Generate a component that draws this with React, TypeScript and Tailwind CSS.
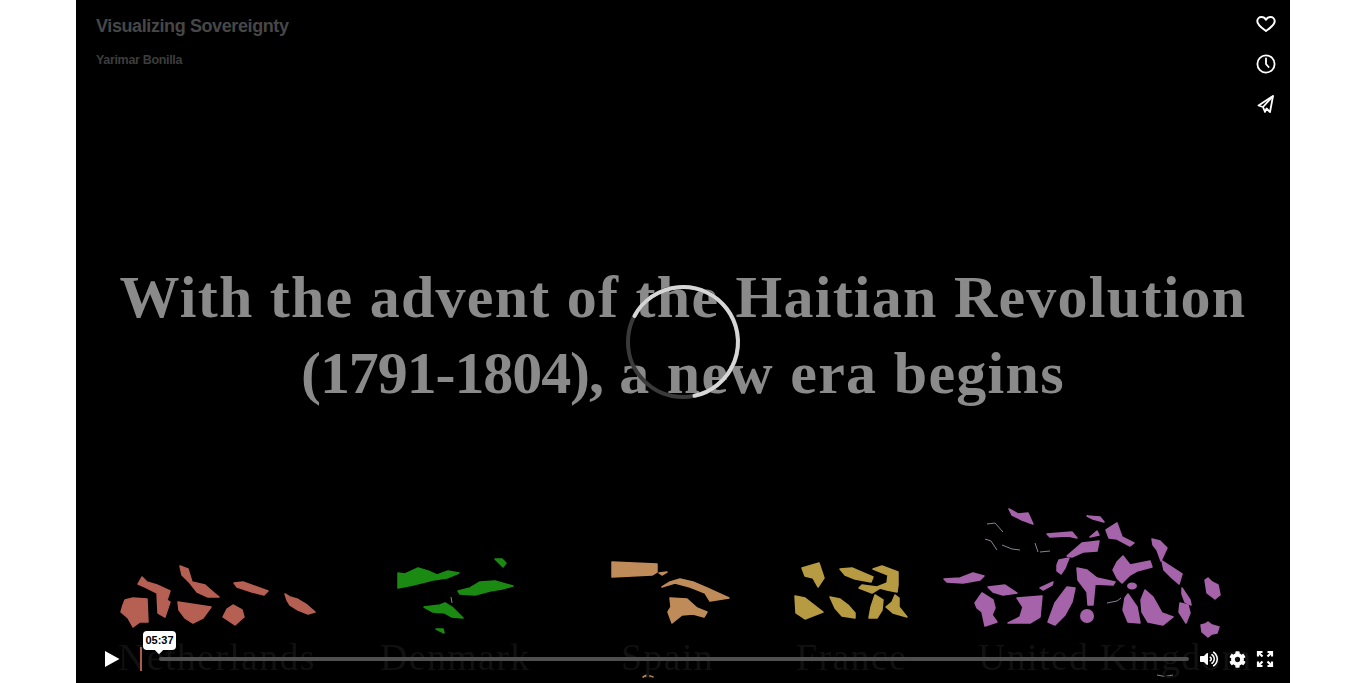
import { FaCog, FaVolumeUp } from "react-icons/fa";

const NL = [
  "125,600 133,598 147,599 148,622 140,622 133,627 128,618 121,612 123,605",
  "142,577 147,582 157,585 170,591 167,600 170,602 165,617 158,613 157,593 145,587 138,584",
  "180,566 188,569 192,582 205,585 213,592 219,597 208,597 197,592 190,583 182,575",
  "234,583 243,582 268,591 264,595 252,592 237,587",
  "178,602 211,607 203,618 193,623 185,618 179,610",
  "233,605 242,610 244,617 235,625 223,617 227,609",
  "285,594 290,597 297,599 307,605 315,612 308,614 298,610 290,605 287,600",
];
const DK = [
  "398,573 405,574 418,568 428,571 437,575 448,571 459,573 447,578 433,580 413,585 398,588",
  "495,559 502,559 506,563 503,567",
  "458,591 470,588 480,582 495,581 513,586 502,589 490,591 475,595 460,594",
  "424,607 440,605 445,603 453,608 463,618 452,617 445,613 433,612",
  "436,629 443,629 444,633",
];
const ES = [
  "612,562 657,564 657,572 652,575 612,577",
  "659,573 667,572 662,575",
  "662,587 670,582 680,579 693,582 707,588 729,598 710,601 705,593 690,587 675,583 665,586",
  "670,598 687,599 697,608 707,612 704,617 693,614 682,615 672,623 668,612 671,607",
  "643,677 647,675 653,677",
];
const FR = [
  "802,568 819,563 824,578 818,587 813,578 805,576",
  "840,569 852,568 873,577 871,582 855,579 845,575",
  "795,596 805,598 823,612 805,619 796,613",
  "830,597 840,599 848,605 855,613 855,618 842,616 835,608",
  "873,569 882,566 898,572 898,585 897,592 887,590 880,588 872,593 859,588 862,585 877,587 887,583 888,575",
  "875,595 883,600 882,610 877,618 869,618 871,607",
  "895,595 899,598 899,607 907,617 893,613 886,607 892,602",
];
const UK = [
  "1009,509 1018,514 1028,513 1033,524 1022,520 1012,515",
  "1087,516 1100,517 1104,522 1093,519",
  "1106,530 1117,523 1122,537 1134,543 1130,546 1117,539 1109,538",
  "1047,534 1072,532 1077,538 1068,536 1050,537",
  "1067,556 1082,543 1099,541 1097,551 1083,552 1072,557",
  "1090,537 1097,531 1099,535",
  "1152,539 1160,541 1167,548 1161,561 1157,550 1153,545",
  "1059,560 1069,558 1065,568 1061,574 1057,571 1057,565",
  "1113,570 1117,562 1123,556 1130,565 1150,561 1152,567 1137,571 1130,575 1122,583 1117,578",
  "1162,561 1182,574 1179,584 1172,578 1164,570",
  "944,579 960,578 973,573 984,576 980,580 963,583 947,582",
  "988,587 1005,585 1017,593 1003,595 993,592",
  "975,603 982,593 993,600 995,608 992,615 997,622 985,626 982,612 977,608",
  "1017,598 1042,596 1040,617 1030,623 1008,623 1020,617 1023,607",
  "1040,588 1053,582 1052,585 1043,590",
  "1067,587 1075,588 1072,602 1065,615 1055,625 1048,622 1055,603",
  "1077,568 1087,570 1097,578 1115,582 1113,585 1095,584 1093,605 1088,605 1087,592 1078,580",
  "1128,594 1137,607 1140,623 1128,622 1123,610 1125,598",
  "1145,590 1153,597 1162,613 1173,617 1163,625 1148,622 1142,612 1141,600",
  "1182,588 1190,600 1191,605 1185,602 1182,594",
  "1180,603 1188,605 1190,613 1186,623 1179,612",
  "1205,580 1208,578 1212,582 1218,585 1220,595 1215,599 1207,593",
  "1201,625 1205,624 1208,622 1212,625 1219,627 1217,633 1212,634 1208,637 1202,632",
];
const SLIVERS = [
  "M985 539l6 2 6 9",
  "M1002 545l10 4 8 1",
  "M1035 543l3 9",
  "M1040 552l10-1",
  "M987 524l8-1 8 9",
  "M1107 603l10-2 4-3",
  "M1157 675q8 3 16 0",
  "M451 597l1 6",
];
const LABELS: [string, string][] = [
  ["Netherlands", "w-[196px] ml-[42px]"],
  ["Denmark", "w-[150px] ml-[66px]"],
  ["Spain", "w-[90px] ml-[91px]"],
  ["France", "w-[108px] ml-[85px]"],
  ["United Kingdom", "w-[270px] ml-[74px]"],
];

function Islands({ shapes, fill }: { shapes: string[]; fill: string }) {
  return (
    <g fill={fill} stroke={fill} strokeWidth="1.500" strokeLinejoin="round">
      {shapes.map((p) => (
        <polygon key={p} points={p} />
      ))}
    </g>
  );
}

export default function App() {
  return (
    <div className="min-h-[683px] bg-white">
      <div className="relative mx-auto h-[683px] w-[1214px] overflow-hidden bg-black font-['Liberation_Sans',sans-serif]">
        {/* video frame */}
        <svg className="absolute inset-0 h-[683px] w-[1214px] blur-[0.3px]" viewBox="76 0 1214 683">
          <Islands shapes={NL} fill="#b65f53" />
          <Islands shapes={DK} fill="#1b8a12" />
          <Islands shapes={ES} fill="#bf8b59" />
          <Islands shapes={FR} fill="#b79b43" />
          <Islands shapes={UK} fill="#a563a9" />
          <g fill="#a563a9">
            <circle cx="1087" cy="616" r="7" />
            <ellipse cx="1132" cy="586" rx="5" ry="3.500" />
          </g>
          <g fill="none" stroke="#8f7f93" strokeWidth="1">
            {SLIVERS.map((d) => (
              <path key={d} d={d} />
            ))}
          </g>
        </svg>

        <div className="absolute inset-0 flex flex-col pt-[259px] pb-[4px] font-['Liberation_Serif',serif]">
          <div className="text-center text-[60px] font-bold leading-[76px] text-[#8a8a8a] blur-[0.4px]">
            <div className="tracking-[1.25px]">With the advent of the Haitian Revolution</div>
            <div className="tracking-[1.3px]">
              <span className="tracking-[-1.1px]">(1791-1804),</span> a new era begins
            </div>
          </div>
          <div className="mt-auto flex text-[38px] leading-[44px] tracking-[1.3px] text-[#111111] blur-[0.6px]">
            {LABELS.map(([t, c]) => (
              <span key={t} className={`${c} shrink-0 whitespace-nowrap`}>
                {t}
              </span>
            ))}
          </div>
        </div>

        {/* spinner */}
        <div className="absolute inset-0 flex items-center justify-center">
          <svg className="h-[118px] w-[118px]" viewBox="0 0 118 118" fill="none" strokeWidth="4">
            <circle cx="59" cy="59" r="55" stroke="#3a3a3a" />
            <path d="M10.500 33A55 55 0 1 1 70.500 112.800" stroke="#d6d6d6" strokeLinecap="round" />
          </svg>
        </div>

        {/* player chrome */}
        <div className="absolute inset-0 flex flex-col justify-between">
          <div className="flex items-start justify-between pl-5 pr-3 pt-3">
            <div className="flex flex-col gap-[15px] pt-[3px] font-bold">
              <div className="text-[18px] leading-[22px] tracking-[-0.4px] text-[#474747]">Visualizing Sovereignty</div>
              <div className="text-[12.5px] leading-[16px] tracking-[-0.33px] text-[#3d3d3d]">Yarimar Bonilla</div>
            </div>
            <div className="flex flex-col gap-4 text-white">
              <svg className="h-6 w-6" viewBox="0 0 24 24" fill="none" stroke="currentColor" strokeWidth="2" strokeLinejoin="round">
                <path d="M12 19C8 16 3.300 13 3.300 9.200 3.300 6.700 5.300 5 7.500 5 9.500 5 11 6 12 7.600 13 6 14.500 5 16.500 5c2.200 0 4.200 1.700 4.200 4.200C20.700 13 16 16 12 19z" />
              </svg>
              <svg className="h-6 w-6" viewBox="0 0 24 24" fill="none" stroke="currentColor" strokeWidth="1.800" strokeLinecap="round">
                <circle cx="12" cy="12" r="8.600" />
                <path d="M12 6.500v5.500l2.600 3" />
              </svg>
              <svg className="h-6 w-6" viewBox="0 0 24 24" fill="none" stroke="currentColor" strokeWidth="1.800" strokeLinejoin="round">
                <path d="M19 4 4.500 13.500 9 15l2 5 1.500-3.500L16 20z" />
                <path d="M9 15 19 4" />
              </svg>
            </div>
          </div>

          <div className="mb-[12px] flex h-6 items-center pl-[24px] pr-[12px]">
            <svg className="h-[24px] w-[24px] shrink-0" viewBox="0 0 24 24" fill="white">
              <path d="M5 4l14.500 8L5 20z" />
            </svg>
            <div className="relative ml-[16px] h-6 w-[2px] shrink-0 bg-[#a95b51]">
              <div className="absolute bottom-[21px] left-[3px] flex h-[19px] w-[33px] items-center justify-center rounded-[4px] bg-white text-[11px] font-bold leading-none text-black">
                05:37
                <span className="absolute left-[13px] top-[16px] h-[6px] w-[6px] rotate-45 bg-white" />
              </div>
            </div>
            <div className="ml-[17px] h-[4px] w-[1030px] shrink-0 rounded-[2px] bg-[#4f4f4f]" />
            <div className="ml-[8px] flex h-6 w-6 shrink-0 items-center justify-center text-white">
              <FaVolumeUp size={18} />
            </div>
            <div className="ml-[4px] flex h-6 w-6 shrink-0 items-center justify-center text-white">
              <FaCog size={17} />
            </div>
            <svg className="ml-[4px] h-6 w-6 shrink-0" viewBox="0 0 24 24" fill="none" stroke="white" strokeWidth="2.200">
              <path d="M5.500 5.500l4 4M18.500 5.500l-4 4M5.500 18.500l4-4M18.500 18.500l-4-4" />
              <path d="M5 9.500V5h4.500M14.500 5H19v4.500M5 14.500V19h4.500M14.500 19H19v-4.500" />
            </svg>
          </div>
        </div>
      </div>
    </div>
  );
}
